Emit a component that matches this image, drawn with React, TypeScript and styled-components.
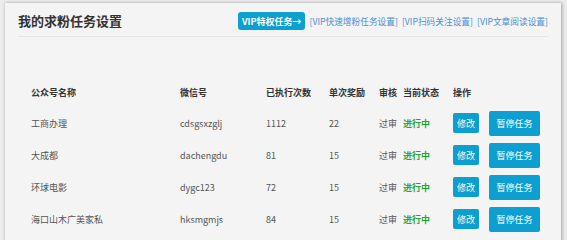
import React from 'react'
import styled, { createGlobalStyle } from 'styled-components'

const GlobalStyle = createGlobalStyle`
  html, body {
    margin: 0;
    padding: 0;
    background: #ececec;
    font-family: "Noto Sans CJK SC", "Noto Sans", sans-serif;
  }
`

const Page = styled.div`
  padding: 3px 6px 0 5px;
  height: 240px;
  box-sizing: border-box;
  overflow: hidden;
`

const Panel = styled.section`
  background: #f4f4f4;
  min-height: 260px;
  padding: 0 13px;
  box-shadow: 0 0 3px rgba(0, 0, 0, 0.22), 2px 0 3px rgba(0, 0, 0, 0.14);
`

const TitleBar = styled.header`
  display: flex;
  align-items: center;
  justify-content: space-between;
  padding: 9px 0 6px;
  border-bottom: 1px solid #e6e6e6;
`

const Title = styled.h1`
  margin: 0;
  font-size: 13px;
  line-height: 18px;
  font-weight: bold;
  color: #333;
`

const Links = styled.nav`
  display: flex;
  align-items: center;
  gap: 4px;
`

const VipButton = styled.a`
  display: inline-flex;
  align-items: center;
  height: 18px;
  padding: 0 4px 0 4px;
  border-radius: 3px;
  background: #0e9fd1;
  color: #fff;
  font-size: 9px;
  font-weight: bold;
  text-decoration: none;
`

const SubLink = styled.a`
  color: #4a8fd3;
  font-size: 8.7px;
  text-decoration: none;
`

const Table = styled.div`
  margin-top: 40px;
  padding-left: 13px;
`

const Row = styled.div<{ $head?: boolean }>`
  display: grid;
  grid-template-columns: 149px 86px 63px 50px 24px 50px auto;
  align-items: center;
  height: ${p => (p.$head ? 30 : 32)}px;
  font-size: 9px;
  color: ${p => (p.$head ? '#333' : '#555')};
  font-weight: ${p => (p.$head ? 'bold' : 'normal')};
`

const Status = styled.span`
  color: #1ea83a;
  font-weight: bold;
`

const Ops = styled.div`
  display: flex;
  align-items: center;
  gap: 10px;
`

const Btn = styled.button<{ $big?: boolean }>`
  border: none;
  border-radius: 2px;
  background: #0e9fd1;
  color: #fff;
  font-family: inherit;
  font-size: 9px;
  padding: 0;
  width: ${p => (p.$big ? 51 : 26)}px;
  height: ${p => (p.$big ? 25 : 20)}px;
  cursor: pointer;
`

const rows = [
  { name: '工商办理', wx: 'cdsgsxzglj', done: 1112, reward: 22 },
  { name: '大成都', wx: 'dachengdu', done: 81, reward: 15 },
  { name: '环球电影', wx: 'dygc123', done: 72, reward: 15 },
  { name: '海口山木广美家私', wx: 'hksmgmjs', done: 84, reward: 15 },
]

export default function App() {
  return (
    <Page>
      <GlobalStyle />
      <Panel>
        <TitleBar>
          <Title>我的求粉任务设置</Title>
          <Links>
            <VipButton href="#">VIP特权任务→</VipButton>
            <SubLink href="#">[VIP快速增粉任务设置]</SubLink>
            <SubLink href="#">[VIP扫码关注设置]</SubLink>
            <SubLink href="#">[VIP文章阅读设置]</SubLink>
          </Links>
        </TitleBar>
        <Table>
          <Row $head>
            <span>公众号名称</span>
            <span>微信号</span>
            <span>已执行次数</span>
            <span>单次奖励</span>
            <span>审核</span>
            <span>当前状态</span>
            <span>操作</span>
          </Row>
          {rows.map(r => (
            <Row key={r.wx}>
              <span>{r.name}</span>
              <span>{r.wx}</span>
              <span>{r.done}</span>
              <span>{r.reward}</span>
              <span>过审</span>
              <Status>进行中</Status>
              <Ops>
                <Btn>修改</Btn>
                <Btn $big>暂停任务</Btn>
              </Ops>
            </Row>
          ))}
        </Table>
      </Panel>
    </Page>
  )
}
